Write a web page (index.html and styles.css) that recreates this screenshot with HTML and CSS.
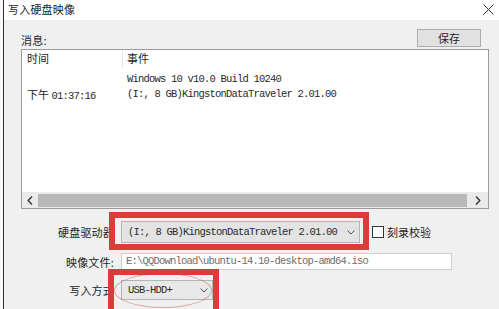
FILE: index.html
```html
<!DOCTYPE html>
<html lang="zh-CN">
<head>
    <meta charset="UTF-8">
    <meta name="viewport" content="width=device-width, initial-scale=1.0">
    <title>写入硬盘映像</title>
    <link rel="stylesheet" href="styles.css">
</head>
<body>
    <div class="window">
        <div class="titlebar">
            <span class="title">写入硬盘映像</span>
            <svg class="close" width="11" height="11" viewBox="0 0 11 11">
                <path d="M0.5 0.5 L10.5 10.5 M10.5 0.5 L0.5 10.5" stroke="#333" stroke-width="1" fill="none"/>
            </svg>
        </div>

        <div class="content">
            <div class="msg-head">
                <span class="label-msg">消息:</span>
                <button class="btn">保存</button>
            </div>

            <div class="list">
                <div class="list-header">
                    <div class="col-time">时间</div>
                    <div class="col-event">事件</div>
                </div>
                <div class="list-rows">
                    <div class="row">
                        <div class="col-time"></div>
                        <div class="col-event mono">Windows 10 v10.0 Build 10240</div>
                    </div>
                    <div class="row">
                        <div class="col-time">下午 <span class="mono">01:37:16</span></div>
                        <div class="col-event mono">(I:, 8 GB)KingstonDataTraveler 2.01.00</div>
                    </div>
                </div>
                <div class="hbar">
                    <svg class="hbar-arrow" width="6" height="9" viewBox="0 0 6 9"><path d="M5 0.5 L1.2 4.5 L5 8.5" stroke="#333" stroke-width="1.4" fill="none"/></svg>
                    <div class="hbar-grip"></div>
                    <svg class="hbar-arrow" width="6" height="9" viewBox="0 0 6 9"><path d="M1 0.5 L4.8 4.5 L1 8.5" stroke="#333" stroke-width="1.4" fill="none"/></svg>
                </div>
            </div>

            <div class="form">
                <div class="form-label">硬盘驱动器</div>
                <div class="field">
                    <div class="combo combo-drive mark-drive">
                        <span class="mono">(I:, 8 GB)KingstonDataTraveler 2.01.00</span>
                        <svg class="chevron" width="8" height="5" viewBox="0 0 8 5"><path d="M0.5 0.5 L4 4 L7.5 0.5" stroke="#555" stroke-width="1" fill="none"/></svg>
                    </div>
                    <label class="check"><span class="box"></span>刻录校验</label>
                </div>

                <div class="form-label">映像文件:</div>
                <div class="field">
                    <div class="textbox mono">E:\QQDownload\ubuntu-14.10-desktop-amd64.iso</div>
                </div>

                <div class="form-label">写入方式</div>
                <div class="field">
                    <div class="combo combo-mode mark-mode">
                        <span class="mono">USB-HDD+</span>
                        <svg class="chevron" width="8" height="5" viewBox="0 0 8 5"><path d="M0.5 0.5 L4 4 L7.5 0.5" stroke="#555" stroke-width="1" fill="none"/></svg>
                        <span class="ellipse"></span>
                    </div>
                </div>
            </div>
        </div>
    </div>
</body>
</html>
```

FILE: styles.css
```css
* {
    margin: 0;
    padding: 0;
    box-sizing: border-box;
}

body {
    width: 499px;
    height: 309px;
    overflow: hidden;
    background-color: #f7f7f7;
    font-family: 'Noto Sans CJK SC', sans-serif;
    font-size: 11px;
    color: #1e1e1e;
}

.mono {
    font-family: 'Liberation Mono', 'Noto Sans CJK SC', monospace;
    font-size: 10.5px;
    letter-spacing: -0.8px;
    color: #2a2a2a;
}

.window {
    margin-left: 3px;
    height: 309px;
    border-left: 1px solid #2f2f2f;
    background-color: #f0f0f0;
}

.titlebar {
    height: 20px;
    background-color: #fff;
    display: flex;
    align-items: center;
    justify-content: space-between;
    padding: 0 5px 2px 4px;
}

.title {
    letter-spacing: 0.2px;
}

.content {
    padding: 0 10px 0 17px;
}

.msg-head {
    height: 29px;
    display: flex;
    justify-content: space-between;
    align-items: flex-end;
    padding-bottom: 2px;
}

.label-msg {
    line-height: 14px;
    letter-spacing: 0.2px;
}

.btn {
    width: 64px;
    height: 18px;
    margin-right: 8px;
    background-color: #e1e1e1;
    border: 1px solid #adadad;
    font-family: 'Noto Sans CJK SC', sans-serif;
    font-size: 11px;
    color: #1e1e1e;
    line-height: 14px;
}

.list {
    position: relative;
    height: 160px;
    border: 1px solid #9a9a9a;
    background-color: #fff;
}

.list-header {
    display: flex;
    height: 18px;
    line-height: 17px;
}

.list-header .col-time {
    border-right: 1px solid #e5e5e5;
}

.col-time {
    width: 101px;
    padding-left: 5px;
    white-space: nowrap;
}

.col-event {
    padding-left: 4px;
    white-space: nowrap;
}

.list-rows {
    padding-top: 4px;
}

.row {
    display: flex;
    height: 15px;
    line-height: 15px;
}

/* horizontal scrollbar pinned over the bottom of the list */
.hbar {
    position: absolute;
    left: 0;
    right: 0;
    bottom: 0;
    height: 16px;
    display: flex;
    align-items: center;
    background-color: #eaeaea;
}

.hbar-arrow {
    flex-shrink: 0;
    margin: 0 5px;
}

.hbar-arrow:last-child {
    margin: 0 7px 0 8px;
}

.hbar-grip {
    flex: 1;
    height: 13px;
    background-color: #b8b8b8;
}

.form {
    display: grid;
    grid-template-columns: 93px auto;
    grid-template-rows: 22px 17px 20px;
    column-gap: 7px;
    row-gap: 10px;
    margin-top: 12px;
}

.form-label {
    text-align: right;
    align-self: center;
    letter-spacing: 0.2px;
    white-space: nowrap;
}

.field {
    display: flex;
    align-items: center;
}

.combo {
    position: relative;
    height: 100%;
    display: flex;
    align-items: center;
    justify-content: space-between;
    padding: 0 4px 0 6px;
    background-color: #e3e3e3;
    border: 1px solid #b4b4b4;
}

.combo-drive {
    width: 239px;
}

.combo-mode {
    width: 92px;
    background-color: #e8e8e8;
}

.check {
    display: flex;
    align-items: center;
    margin-left: 12px;
}

.box {
    width: 12px;
    height: 12px;
    border: 1px solid #333;
    background-color: #fff;
    margin-right: 3px;
}

.textbox {
    width: 331px;
    height: 100%;
    line-height: 15px;
    padding-left: 4px;
    background-color: #fff;
    border: 1px solid #cfcfcf;
    color: #6e6e6e;
    white-space: nowrap;
}

/* red annotation boxes drawn over the screenshot */
.mark-drive::after,
.mark-mode::after {
    content: "";
    position: absolute;
    border: 6px solid #dc3b3b;
    pointer-events: none;
}

.mark-drive::after {
    top: -10px;
    left: -13px;
    right: -10px;
    bottom: -8px;
}

.mark-mode::after {
    top: -12px;
    left: -14px;
    right: -7px;
    bottom: -16px;
}

.ellipse {
    position: absolute;
    top: -8px;
    left: -8px;
    right: 0;
    bottom: -9px;
    border: 1px solid rgba(200, 70, 70, 0.45);
    border-radius: 50%;
}
```
